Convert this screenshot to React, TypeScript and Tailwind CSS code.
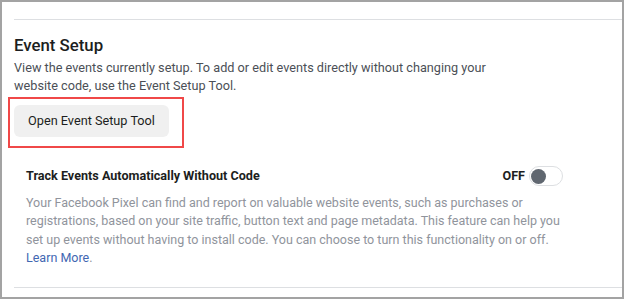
export default function App() {
  return (
    <div className="w-[624px] h-[299px] overflow-hidden bg-white border-2 border-[#a3a3a3] font-['Roboto',sans-serif]">
      <div className="ml-3 mt-[17px] border-t border-[#dddfe2]">
        <h2 className="mt-[14px] text-[16.8px] leading-[22px] font-medium text-[#1c1e21]">Event Setup</h2>
        <p className="mt-[3px] text-[12.7px] leading-[17.5px] text-[#4b4f56]">
          View the events currently setup. To add or edit events directly without changing your
          <br />
          website code, use the Event Setup Tool.
        </p>
        <div className="mt-[3px] -ml-[6px] w-[176px] h-[51px] border-2 border-[#f04848] pl-[4px] pt-[6px]">
          <button className="h-[32px] w-[155px] whitespace-nowrap rounded-[6px] bg-[#f0f0f0] text-[12.7px] text-[#1c1e21]">
            Open Event Setup Tool
          </button>
        </div>
        <div className="mt-[18px] pl-3 pr-[59px]">
          <div className="flex items-center justify-between">
            <span className="text-[12.6px] font-bold text-[#1c1e21]">Track Events Automatically Without Code</span>
            <div className="flex items-center gap-[4px]">
              <span className="text-[12.6px] font-bold text-[#1c1e21]">OFF</span>
              <span className="w-[34px] h-[20px] rounded-full border border-[#dddfe2] bg-white flex items-center pl-[1px]">
                <span className="w-[15px] h-[15px] rounded-full bg-[#606770]" />
              </span>
            </div>
          </div>
          <p className="mt-[8px] whitespace-nowrap text-[12.5px] leading-[18.4px] text-[#90949c]">
            Your Facebook Pixel can find and report on valuable website events, such as purchases or
            <br />
            registrations, based on your site traffic, button text and page metadata. This feature can help you
            <br />
            set up events without having to install code. You can choose to turn this functionality on or off.
            <br />
            <a className="text-[#4267b2]">Learn More</a>.
          </p>
        </div>
        <div className="mt-[19px] border-t border-[#dddfe2]" />
      </div>
    </div>
  );
}
